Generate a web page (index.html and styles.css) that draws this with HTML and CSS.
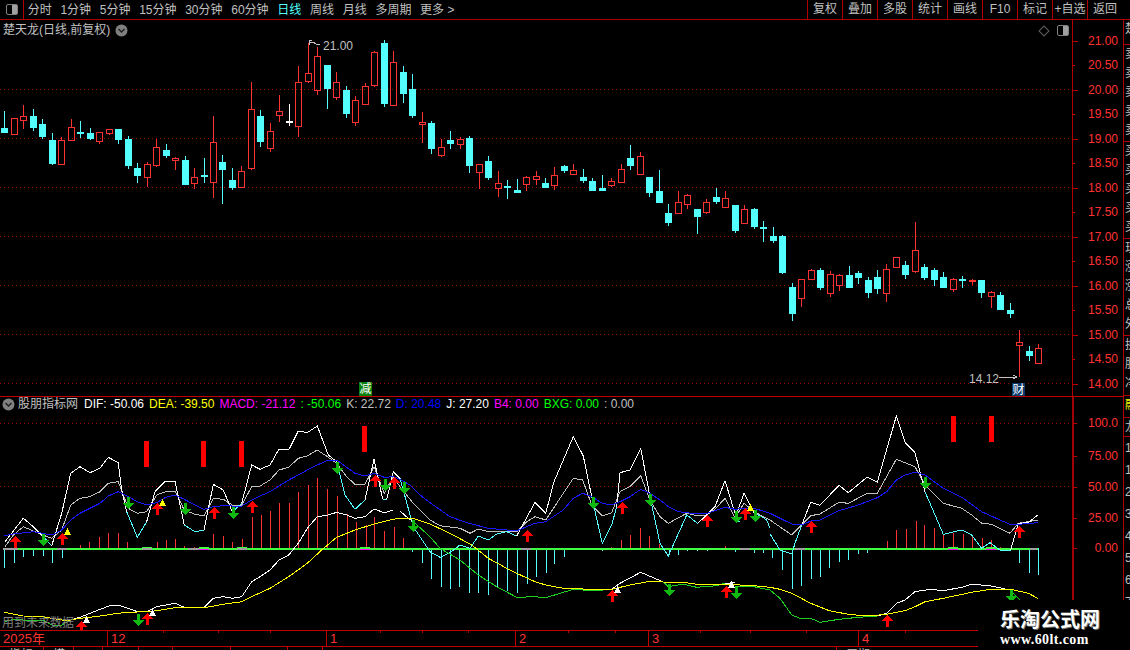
FILE: index.html
```html
<!DOCTYPE html>
<html lang="zh-CN">
<head>
    <meta charset="UTF-8">
    <meta name="viewport" content="width=device-width, initial-scale=1.0">
    <title>楚天龙 日线</title>
    <link rel="stylesheet" href="styles.css">
</head>
<body>

<div class="toolbar">
    <div class="tabs">
        <div class="panel-toggle"><span class="half-box"></span></div>
        <span class="tab">分时</span>
        <span class="tab">1分钟</span>
        <span class="tab">5分钟</span>
        <span class="tab">15分钟</span>
        <span class="tab">30分钟</span>
        <span class="tab">60分钟</span>
        <span class="tab active">日线</span>
        <span class="tab">周线</span>
        <span class="tab">月线</span>
        <span class="tab">多周期</span>
        <span class="tab">更多 &gt;</span>
    </div>
    <div class="tools">
        <span class="tool">复权</span>
        <span class="tool">叠加</span>
        <span class="tool">多股</span>
        <span class="tool">统计</span>
        <span class="tool">画线</span>
        <span class="tool">F10</span>
        <span class="tool">标记</span>
        <span class="tool">+自选</span>
        <span class="tool">返回</span>
    </div>
</div>

<div class="main">
    <div class="charts">
        <div class="pane price-pane">
            <div class="plot">
                <svg id="priceChart" class="chart" width="1072" height="376" viewBox="0 20 1072 376"></svg>
                <div class="pane-title">
                    <span>楚天龙(日线,前复权)</span>
                    <svg class="chevron" width="13" height="13" viewBox="0 0 13 13"><circle cx="6.5" cy="6.5" r="6" fill="#808080"/><path d="M3.5 5l3 3 3-3" fill="none" stroke="#202020" stroke-width="1.5"/></svg>
                </div>
                <div class="pane-icons">
                    <span class="diamond"></span>
                    <span class="half-box"></span>
                </div>
                <span class="badge badge-jian">减</span>
                <span class="badge badge-cai">财</span>
            </div>
            <div id="priceAxis" class="axis"></div>
        </div>

        <div class="pane macd-pane">
            <div class="plot">
                <svg id="macdChart" class="chart" width="1072" height="233" viewBox="0 397 1072 233"></svg>
                <div class="legend">
                    <svg class="chevron" width="13" height="13" viewBox="0 0 13 13"><circle cx="6.5" cy="6.5" r="6" fill="#808080"/><path d="M3.5 5l3 3 3-3" fill="none" stroke="#202020" stroke-width="1.5"/></svg>
                    <span class="legend-name">股朋指标网</span>
                    <span class="c-white">DIF: -50.06</span>
                    <span class="c-yellow">DEA: -39.50</span>
                    <span class="c-magenta">MACD: -21.12</span>
                    <span class="c-green">: -50.06</span>
                    <span class="c-silver">K: 22.72</span>
                    <span class="c-blue">D: 20.48</span>
                    <span class="c-white">J: 27.20</span>
                    <span class="c-magenta">B4: 0.00</span>
                    <span class="c-green">BXG: 0.00</span>
                    <span class="c-silver">: 0.00</span>
                </div>
                <span class="future-note">用到未来数据</span>
            </div>
            <div id="macdAxis" class="axis axis-thick"></div>
        </div>

        <div class="timebar">
            <span class="month m-2025">2025年</span>
            <span class="month m-12">12</span>
            <span class="month m-1">1</span>
            <span class="month m-2">2</span>
            <span class="month m-3">3</span>
            <span class="month m-4">4</span>
        </div>
        <div class="tabbar">
            <span class="sheet s1">指标</span>
            <span class="sheet s2">模</span>
            <span class="sheet s3"></span>
            <span class="sheet s4"></span>
            <span class="sheet s5"></span>
            <span class="sheet s6"></span>
            <span class="sheet s7"></span>
            <span class="sheet s8"></span>
            <span class="sheet s9"></span>
            <span class="sheet s10">周期</span>
        </div>
    </div>

    <div class="sidebar">
        <div class="side-group g1"><p>楚</p></div>
        <div class="side-group g2"><p>卖</p><p>卖</p><p>卖</p><p>卖</p><p>卖</p></div>
        <div class="side-group g2"><p>买</p><p>买</p><p>买</p><p>买</p><p>买</p></div>
        <div class="side-group g2"><p>现</p><p>涨</p><p>涨</p><p>总</p><p>外</p></div>
        <div class="side-group g3"><p>换</p><p>股</p><p>净</p></div>
        <div class="side-group g4"><p class="c-yellow">融</p></div>
        <div class="side-group g5"><p>龙</p></div>
        <div class="side-group g6"><p>1</p><p>1</p><p>2</p><p>3</p><p>4</p><p>5</p><p>6</p><p>7</p></div>
    </div>
</div>

<div class="watermark">
    <div class="wm-name">乐淘公式网</div>
    <div class="wm-url">www.60lt.com</div>
</div>

<script src="chart.js"></script>
</body>
</html>
```

FILE: styles.css
```css
* {
    box-sizing: border-box;
}
html, body {
    margin: 0;
    padding: 0;
    width: 1130px;
    height: 650px;
    overflow: hidden;
    background-color: #000;
    color: #c0c0c0;
    font-family: "Liberation Sans", "Noto Sans CJK SC", sans-serif;
    font-size: 12px;
    line-height: 14px;
}

/* top bar */
.toolbar {
    display: flex;
    justify-content: space-between;
    height: 20px;
    padding-right: 8px;
    border-bottom: 1px solid #b00000;
}
.tabs {
    display: flex;
    align-items: center;
    gap: 8.7px;
}
.panel-toggle {
    display: flex;
    align-items: center;
    justify-content: center;
    width: 24px;
    height: 19px;
    margin-right: -5px;
    border-right: 1px solid #b00000;
}
.half-box {
    display: block;
    width: 12px;
    height: 11px;
    border: 1px solid #808080;
    border-radius: 2px;
    background: linear-gradient(to right, #000 50%, #a0a0a0 50%);
}
.tab {
    white-space: nowrap;
}
.tab.active {
    color: #54ffff;
}
.tools {
    display: flex;
}
.tool {
    width: 35px;
    height: 19px;
    border-left: 1px solid #b00000;
    text-align: center;
    line-height: 18px;
    white-space: nowrap;
}

/* layout */
.main {
    display: flex;
    height: 630px;
}
.charts {
    width: 1123px;
}
.pane {
    display: flex;
}
.price-pane {
    height: 377px;
    border-bottom: 1px solid #c00000;
}
.macd-pane {
    height: 233px;
}
.plot {
    position: relative;
    width: 1072px;
    height: 100%;
    overflow: hidden;
}
.chart {
    display: block;
}
.axis {
    position: relative;
    width: 51px;
    border-left: 1px solid #b00000;
    color: #ff3232;
}
.axis-thick {
    border-left: 2px solid #a00000;
}
.axis-label {
    position: absolute;
    right: 5px;
}
.axis-tick {
    position: absolute;
    left: 0;
    height: 1px;
    background-color: #c00000;
}

/* pane overlays */
.pane-title {
    position: absolute;
    top: 3px;
    left: 3px;
    display: flex;
    align-items: center;
    gap: 5px;
}
.pane-icons {
    position: absolute;
    top: 5px;
    right: 3px;
    display: flex;
    align-items: center;
    gap: 8px;
}
.diamond {
    display: block;
    width: 8px;
    height: 8px;
    margin: 0 1px;
    border: 1px solid #606060;
    transform: rotate(45deg);
}
.badge {
    position: absolute;
    width: 13px;
    height: 14px;
    color: #fff;
    font-size: 12px;
    line-height: 14px;
    text-align: center;
}
.badge-jian {
    left: 359px;
    top: 362px;
    background-color: #0a800a;
}
.badge-cai {
    left: 1012px;
    top: 363px;
    background-color: #0a3a6a;
}
.legend {
    position: absolute;
    top: 0;
    left: 2px;
    display: flex;
    align-items: center;
    gap: 5px;
    white-space: nowrap;
}
.legend-name {
    margin-left: -2px;
    margin-right: 1px;
}
.c-white { color: #fff; }
.c-silver { color: #c0c0c0; }
.c-yellow { color: #ffff00; }
.c-magenta { color: #ff00ff; }
.c-green { color: #00ff00; }
.c-blue { color: #0000ff; }
.future-note {
    position: absolute;
    left: 2px;
    top: 219px;
    color: #808080;
}
.chart-note {
    fill: #c0c0c0;
    font-size: 12px;
}

/* time axis and clipped tab row */
.timebar {
    position: relative;
    display: flex;
    height: 17px;
    border-top: 1px solid #c00000;
    border-bottom: 1px solid #c00000;
    color: #ff3232;
    font-size: 13px;
}
.month {
    padding-left: 3px;
    line-height: 15px;
    border-left: 1px solid #c00000;
}
.m-2025 { width: 107px; border-left: 0; }
.m-12 { width: 219px; }
.m-1 { width: 189px; }
.m-2 { width: 133px; }
.m-3 { width: 210px; }
.m-4 { width: 120px; }
.time-tick {
    position: absolute;
    top: 0;
    width: 1px;
    height: 2px;
    background-color: #c00000;
}
.tabbar {
    display: flex;
    height: 4px;
    overflow: hidden;
}
.sheet {
    padding: 1px 0 0 9px;
    border-left: 1px solid #c00000;
}
.s1 { width: 43px; border-left: 0; }
.s2 { width: 30px; }
.s3 { width: 29px; }
.s4 { width: 36px; }
.s5 { width: 34px; }
.s6 { width: 58px; }
.s7 { width: 57px; }
.s8 { width: 35px; }
.s9 { width: 34px; }
.s10 { width: 100px; margin-left: 480px; }

/* cut off quote panel on the right */
.sidebar {
    width: 7px;
    overflow: hidden;
    border-left: 1px solid #b00000;
    line-height: 19px;
}
.side-group {
    padding-left: 1px;
    overflow: hidden;
    border-bottom: 1px solid #b00000;
}
.side-group p {
    margin: 0;
}
.g1 { height: 25px; }
.g2 { height: 97px; }
.g3 { height: 60px; }
.g4 { height: 22px; }
.g5 { height: 19px; }
.g6 { height: 200px; border-bottom: 0; line-height: 22px; }

/* site watermark in the corner */
.watermark {
    position: absolute;
    left: 978px;
    top: 600px;
    width: 152px;
    height: 50px;
    padding: 8px 0 0 22px;
    background-color: #000;
    color: #fff;
}
.wm-name {
    font-size: 20px;
    font-weight: bold;
    line-height: 24px;
    white-space: nowrap;
    text-shadow: 1px 1px 0 #707070;
}
.wm-url {
    margin-top: 1px;
    font-family: "Liberation Serif", serif;
    font-size: 14px;
    font-weight: bold;
    letter-spacing: 0.4px;
    line-height: 14px;
}
```

FILE: chart.js
```js
const NS = 'http://www.w3.org/2000/svg';
const RED = '#ff3232';
const CYAN = '#54ffff';

function add(svg, tag, attrs, text) {
    const el = document.createElementNS(NS, tag);
    for (const k in attrs) el.setAttribute(k, attrs[k]);
    el.setAttribute('shape-rendering', 'crispEdges');
    if (text) {
        el.textContent = text;
        el.setAttribute('shape-rendering', 'auto');
    }
    svg.appendChild(el);
    return el;
}

// daily bars as screen y: high, body top, body bottom, low, kind
const candles = [
    [111,128,133,133,'c'],[118,118,134,134,'r'],[105,116,120,129,'r'],[109,116,128,131,'c'],[119,124,137,139,'c'],
    [133,140,164,165,'c'],[137,140,164,164,'r'],[119,127,140,140,'r'],[121,132,133,138,'c'],[128,133,139,140,'c'],
    [132,132,141,144,'r'],[129,129,133,135,'r'],[129,129,140,144,'c'],[136,139,166,169,'c'],[163,168,176,183,'c'],
    [162,164,177,187,'r'],[139,147,165,167,'r'],[144,150,156,158,'c'],[157,158,160,170,'r'],[156,160,185,185,'c'],
    [168,177,183,189,'r'],[158,175,177,183,'c'],[116,142,182,198,'r'],[155,162,170,204,'c'],[168,180,188,190,'c'],
    [166,171,187,187,'r'],[82,109,168,170,'r'],[110,116,142,147,'c'],[123,131,148,152,'r'],[95,111,115,122,'r'],
    [104,121,122,126,'w'],[66,82,126,137,'r'],[43,73,81,83,'r'],[47,56,90,95,'r'],[65,65,89,109,'c'],
    [72,82,97,100,'r'],[86,90,114,118,'c'],[96,100,122,126,'r'],[83,86,104,105,'r'],[51,52,85,87,'r'],
    [40,43,104,107,'c'],[51,62,105,105,'r'],[66,72,94,103,'c'],[74,89,116,118,'c'],[112,122,124,143,'r'],
    [121,123,149,154,'c'],[139,147,155,157,'r'],[131,140,144,149,'c'],[137,139,144,149,'r'],[136,138,166,173,'c'],
    [164,164,172,189,'r'],[156,161,178,180,'c'],[171,183,188,197,'r'],[180,186,187,199,'c'],[179,190,193,193,'c'],
    [176,177,184,191,'r'],[171,176,179,185,'r'],[178,183,188,188,'c'],[167,175,185,190,'r'],[165,166,171,173,'c'],
    [164,170,174,174,'r'],[169,177,181,183,'c'],[178,181,191,191,'c'],[175,188,191,191,'c'],[178,181,185,187,'r'],
    [164,169,182,183,'r'],[145,158,166,170,'c'],[152,156,174,175,'r'],[177,177,193,197,'c'],[170,191,203,203,'c'],
    [204,213,223,226,'c'],[191,202,213,213,'r'],[194,195,204,209,'r'],[209,209,217,234,'c'],[199,202,212,214,'r'],
    [188,197,202,204,'c'],[191,198,207,207,'r'],[205,205,231,233,'c'],[205,209,223,223,'r'],[208,209,227,229,'c'],
    [221,227,228,242,'c'],[227,236,241,243,'c'],[235,236,273,274,'c'],[283,287,314,321,'c'],[279,279,298,307,'r'],
    [269,270,279,279,'r'],[268,270,288,290,'c'],[271,274,293,297,'r'],[274,275,285,291,'r'],[266,275,288,288,'c'],
    [271,273,278,284,'c'],[277,280,293,298,'c'],[270,277,289,294,'c'],[264,269,293,302,'r'],[257,257,267,267,'r'],
    [261,265,275,279,'c'],[222,250,271,273,'r'],[264,267,278,280,'c'],[268,270,280,286,'c'],[272,277,288,288,'c'],
    [278,279,289,292,'r'],[276,279,281,288,'c'],[279,280,281,285,'r'],[280,280,293,298,'c'],[291,292,296,308,'r'],
    [292,295,310,310,'c'],[303,310,314,318,'c'],[330,342,345,377,'r'],[346,351,356,361,'c'],[344,348,363,363,'r']
];

function drawCandle(svg, c, i) {
    const x = Math.round(4.3 + 9.486 * i);
    const color = c[4] === 'r' ? RED : c[4] === 'w' ? '#fff' : CYAN;
    const wick = { x: x, width: 1, fill: color };
    add(svg, 'rect', { ...wick, y: c[0], height: Math.max(c[1] - c[0], 0) });
    add(svg, 'rect', { ...wick, y: c[2], height: Math.max(c[3] - c[2], 0) });
    if (c[4] === 'r') {
        add(svg, 'rect', { x: x - 2.5, y: c[1] + 0.5, width: 6, height: c[2] - c[1], fill: 'none', stroke: color });
    } else if (c[2] - c[1] < 3) {
        add(svg, 'rect', { x: x - 3, y: c[1], width: 7, height: 2, fill: color });
        add(svg, 'rect', { x: x, y: c[0], width: 1, height: c[3] - c[0], fill: color });
    } else {
        add(svg, 'rect', { x: x - 3, y: c[1], width: 7, height: c[2] - c[1], fill: color });
    }
}

function dotted(svg, y) {
    const line = add(svg, 'line', { x1: 0, x2: 1072, y1: y + 0.5, y2: y + 0.5, stroke: '#a00000', 'stroke-dasharray': '1 3' });
    line.setAttribute('shape-rendering', 'auto');
}

const price = document.getElementById('priceChart');
[89, 138, 187, 236, 285, 334, 383].forEach(y => dotted(price, y));
candles.forEach((c, i) => drawCandle(price, c, i));

add(price, 'polyline', { points: '312,40 309,40 309,45', fill: 'none', stroke: '#c0c0c0' });
add(price, 'polyline', { points: '309,42 313,42 316,44 320,44', fill: 'none', stroke: '#c0c0c0' });
add(price, 'text', { x: 323, y: 50, class: 'chart-note' }, '21.00');
add(price, 'polyline', { points: '999,377 1017,377', fill: 'none', stroke: '#c0c0c0' });
add(price, 'polyline', { points: '1013,375 1017,377 1013,379', fill: 'none', stroke: '#c0c0c0' });
add(price, 'text', { x: 969, y: 383, class: 'chart-note' }, '14.12');

// indicator traces were read off at 3x: x0 is where the run starts, y is from 380
function run(x0, flat) {
    const out = [];
    for (let i = 0; i < flat.length; i += 2) {
        out.push((x0 + flat[i] / 3).toFixed(1) + ',' + (380 + flat[i + 1] / 3).toFixed(1));
    }
    return out;
}

const macd = document.getElementById('macdChart');
dotted(macd, 423);
dotted(macd, 486);

function trace(color, parts) {
    add(macd, 'polyline', { points: parts.join(' '), fill: 'none', stroke: color });
}

// histogram
const bars = [
    ...run(0, [13,565,43,548,70,530,100,528,128,528,155,548,185,533,240,495,268,487,297,472,325,460,355,460,382,487,470,487,497,480,525,477,553,498,583,502,640,462,668,468,697,487,725,477,755,410,782,405,810,393,838,368,868,368,895,335,925,315,952,295,982,327,1010,348,1040,403,1067,425,1097,435,1123,410,1153,453,1182,440]),
    ...run(400, [10,475,37,515,65,548,93,597,122,620,150,627,178,620,208,638,235,638,265,645,292,620,322,633,350,640,380,613,407,590,437,578,463,552,493,530,607,512,633,500,663,480,690,465,720,443,748,468,778,492,808,520,835,525,862,512,892,513,920,513,975,498,1005,517,1063,518,1090,520]),
    ...run(770, [7,533,37,570,65,627,93,617,122,597,150,590,178,565,207,545,235,540,265,522,292,518,350,483,379,450,407,447,437,422,463,435,493,443,520,462,550,458,578,462,607,465,635,473,663,480,690,500,748,550,778,580,805,585])
];
bars.forEach(b => {
    const [x, y] = b.split(',').map(Number);
    const up = y < 548;
    add(macd, 'rect', { x: Math.round(x), width: 1, y: up ? y : 548, height: Math.abs(y - 548), fill: up ? RED : CYAN });
});

// zero line with the flat stretches where it changes colour
add(macd, 'rect', { x: 3, y: 548, width: 1035, height: 2, fill: '#40ff40' });
[[3,15],[57,10],[188,11],[521,10],[740,10],[795,10],[1030,7]].forEach(s => {
    add(macd, 'rect', { x: s[0], y: 548, width: s[1], height: 2, fill: '#a0a0a0' });
});
[[142,10],[237,10]].forEach(s => {
    add(macd, 'rect', { x: s[0], y: 547, width: s[1], height: 1, fill: '#40ff40' });
    add(macd, 'rect', { x: s[0], y: 548, width: s[1], height: 2, fill: '#a0a0a0' });
});
[[199,10],[360,10],[948,10],[986,10]].forEach(s => {
    add(macd, 'rect', { x: s[0], y: 547, width: s[1], height: 1, fill: '#40ff40' });
    add(macd, 'rect', { x: s[0], y: 549, width: s[1], height: 1, fill: '#ff00ff' });
});

// K
trace('#c0c0c0', [
    ...run(0, [15,500,40,465,70,440,128,465,155,475,185,450,212,375,240,355,270,350,300,335,325,310,355,305,385,385,412,400,440,395,470,345,497,335,525,333,553,390,585,403,612,408,640,355,670,358,697,375,725,375,755,320,780,318,810,300,837,270,866,262,895,235,922,228,952,210,985,232,1010,250,1040,290,1065,313,1095,313,1122,260,1153,340,1180,290]),
    ...run(400, [0,320,40,370,90,420,120,437,180,445,210,460,235,447,265,455,320,455,350,455,380,425,405,410,437,420,490,340,520,295,548,300,575,375,607,408,635,398,660,335,690,320,722,287,750,360,780,410,805,430,860,400,893,408,920,405,945,388,975,355,1005,415,1032,370,1062,395]),
    ...run(770, [0,420,65,465,122,407,150,402,207,367,235,370,292,340,322,340,379,238,435,260,465,315,520,370,575,385,605,405,635,430,665,433,720,460,745,430,775,425,803,420])
]);

// J, white while above D and cyan below
const jWhite = [
    run(0, [15,485,70,415,100,440,130,470]),
    run(0, [155,497,185,400,212,280,240,260,270,278,300,265,325,232,355,248,365,330,380,395]),
    run(0, [440,425,465,335,497,303,525,303,553,435]),
    run(0, [612,450,640,313,670,330,697,395]),
    run(0, [725,370,755,255,780,268,810,255,837,207,866,210,895,153,922,158,952,138,985,225,1010,245]),
    run(0, [1095,360,1122,238,1148,358]),
    run(0, [1160,358,1180,275,1200,295]),
    run(400, [350,468,405,367,437,400,462,305,520,170,550,228,575,350]),
    run(400, [650,380,660,278,690,270,722,205,750,350]),
    run(400, [893,430,920,405,945,380,975,302,1005,400]),
    run(400, [1005,415,1032,340,1062,400]),
    run(770, [95,435,122,367,150,376,207,316,235,338,292,291,322,307,379,108,405,187,435,218,465,335]),
    run(770, [722,510,745,430,775,428,803,405])
];
const jCyan = [
    run(0, [130,470,155,497]),
    run(0, [380,395,412,472,440,425]),
    run(0, [553,435,585,455,612,450]),
    run(0, [697,395,725,370]),
    run(0, [1010,245,1035,345,1065,388,1095,360]),
    run(0, [1148,358,1160,358]),
    run(400, [0,295,40,440,90,515,120,532,150,518,180,495,210,505,235,468,265,480,290,462,320,455,350,468]),
    run(400, [575,350,607,490,635,435,650,380]),
    run(400, [750,350,780,490,805,528,860,405,893,430]),
    run(400, [1005,400,1005,425,1020,425]),
    run(400, [1062,400,1085,410,1100,420,1110,445]),
    run(770, [0,462,30,510,65,522,75,490,95,435]),
    run(770, [465,335,520,463,575,450,605,465,635,505,660,488,690,510,722,510])
];
jCyan.forEach(p => trace(CYAN, p));
jWhite.forEach(p => trace('#fff', p));

// D
trace('#1818ff', [
    ...run(0, [13,467,40,462,100,455,155,465,185,450,212,420,240,400,270,385,300,370,325,348,355,335,385,350,412,365,440,375,470,368,497,352,525,345,553,358,585,375,612,388,640,380,670,377,697,378,725,378,755,360,780,348,810,335,837,318,866,300,895,285,922,270,952,255,985,240,1010,240,1040,262,1065,280,1095,288,1122,280,1153,292,1180,290]),
    ...run(400, [0,298,30,315,60,345,100,375,150,410,200,428,265,445,320,450,350,452,380,440,405,430,437,425,490,390,520,355,548,340,575,350,607,370,635,375,660,365,690,350,722,328,750,340,780,360,805,380,835,395,860,398,893,402,920,400,945,392,975,382,1005,388,1032,385,1062,385]),
    ...run(770, [0,400,65,432,95,435,122,423,150,420,207,392,265,375,322,353,350,335,379,300,405,285,435,277,465,285,520,325,575,352,635,395,690,420,720,433,745,433,803,428])
]);

// DIF, white above DEA and green below
const difGreen = [
    run(0, [15,725,40,718,70,720,128,720,155,735,185,735,212,720]),
    run(400, [40,425,90,470,120,505,180,540,235,585,290,620,350,652,405,650,437,653,520,628,575,632,610,630]),
    run(400, [790,606,805,620,850,612,890,622,950,617,975,610]),
    run(400, [1005,618,1062,620,1110,630]),
    run(770, [0,630,30,655,65,705,95,717,122,715,150,727,207,718,265,712,322,708]),
    run(770, [720,630,750,660])
];
const difWhite = [
    run(0, [212,720,240,712,270,700,300,688,330,677,355,675,385,685,412,695,440,695,470,680,525,670,553,682,612,683,640,655,670,650,697,655,725,650,755,605,780,590,810,570,837,540,866,525,895,490,922,445,952,410,985,405,1010,397,1040,405,1065,415,1095,410,1122,387,1153,398,1180,390]),
    run(400, [0,393,25,415,40,425]),
    run(400, [635,628,660,610,722,577,790,606]),
    run(400, [975,610,1005,608]),
    run(770, [322,708,350,700,380,670,405,660,435,635,480,628,520,632,575,622,605,613,660,617,720,630])
];
difGreen.forEach(p => trace('#20d020', p));
difWhite.forEach(p => trace('#fff', p));

// DEA
trace('#ffff00', [
    ...run(0, [13,697,40,702,70,708,128,710,155,715,185,720,212,720,240,715,270,712,300,708,355,700,385,697,440,695,470,692,525,683,612,683,670,673,725,665,755,650,810,625,866,590,922,550,965,510,1010,472,1065,450,1122,432,1180,418]),
    ...run(400, [0,415,40,415,90,432,150,460,215,495,265,535,320,565,350,580,405,605,437,615,490,625,575,628,635,628,690,615,750,604,790,606,850,607,890,613,975,613,1062,617]),
    ...run(770, [0,622,30,628,65,640,122,670,178,692,235,703,292,708,350,703,405,692,435,680,465,665,520,655,605,637,660,628,722,628,775,640,803,655])
]);

// signal marks
[[144,441],[201,441],[239,441],[362,426],[951,416],[989,416]].forEach(b => {
    add(macd, 'rect', { x: b[0], y: b[1], width: 5, height: 26, fill: '#ff0000' });
});

function upArrow(x, y) {
    add(macd, 'polygon', { points: `${x + 0.5},${y} ${x + 6},${y + 6} ${x - 5},${y + 6}`, fill: '#ff0000' });
    add(macd, 'rect', { x: x - 1, y: y + 5, width: 3, height: 7, fill: '#ff0000' });
}
function downArrow(x, y) {
    add(macd, 'rect', { x: x - 1, y: y, width: 3, height: 7, fill: '#10b810' });
    add(macd, 'polygon', { points: `${x + 0.5},${y + 12} ${x + 6},${y + 6} ${x - 5},${y + 6}`, fill: '#10b810' });
}
function flag(x, y, color) {
    add(macd, 'polygon', { points: `${x + 0.5},${y} ${x + 4},${y + 7} ${x - 3},${y + 7}`, fill: color });
}

[[15,536],[62,533],[81,621],[147,613],[157,503],[214,507],[252,501],[375,475],[394,477],[527,530],[612,590],[622,502],[707,515],[726,586],[745,508],[811,521],[887,615],[1019,526]].forEach(a => upArrow(a[0], a[1]));
[[43,534],[128,497],[185,503],[233,507],[138,614],[337,462],[385,479],[404,482],[413,520],[593,497],[650,494],[669,584],[736,511],[755,510],[736,587],[925,477],[1011,590]].forEach(a => downArrow(a[0], a[1]));
[[67,528],[162,499],[750,504]].forEach(a => flag(a[0], a[1], '#ffff00'));
[[86,616],[152,609],[617,586],[731,581]].forEach(a => flag(a[0], a[1], '#fff'));

// right hand scales
function axisLabel(axis, top, y, text, tick) {
    const label = document.createElement('span');
    label.className = 'axis-label';
    label.style.top = (y - top - 7) + 'px';
    label.textContent = text;
    axis.appendChild(label);
    const mark = document.createElement('i');
    mark.className = 'axis-tick';
    mark.style.top = (y - top) + 'px';
    mark.style.width = tick + 'px';
    axis.appendChild(mark);
}

const priceAxis = document.getElementById('priceAxis');
for (let i = 0; i <= 14; i++) {
    const p = 21 - i * 0.5;
    axisLabel(priceAxis, 20, Math.round(40.5 + i * 24.5), p.toFixed(2), i % 2 === 0 ? 5 : 2);
}
const macdAxis = document.getElementById('macdAxis');
[[423,'100.0'],[456,'75.00'],[487,'50.00'],[518,'25.00'],[548,'0.00']].forEach(a => {
    axisLabel(macdAxis, 397, a[0], a[1], 3);
});

// small ticks along the time axis
const timebar = document.querySelector('.timebar');
[163, 218, 270, 380, 422, 468, 568, 615, 700, 750, 806, 905].forEach(x => {
    const t = document.createElement('i');
    t.className = 'time-tick';
    t.style.left = x + 'px';
    timebar.appendChild(t);
});
```
